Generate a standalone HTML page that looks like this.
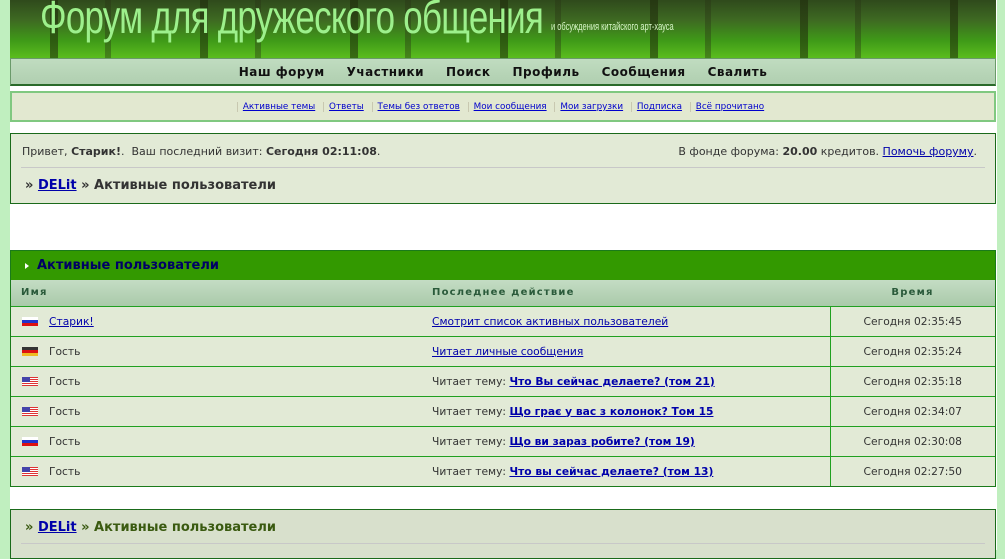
<!DOCTYPE html>
<html><head><meta charset="utf-8"><style>
*{margin:0;padding:0;box-sizing:border-box}
body{width:1005px;height:550px;overflow:hidden;background:#c0efbf;font-family:Verdana,"DejaVu Sans",sans-serif;font-size:11px;color:#333}
#wrap{position:absolute;left:10px;top:0;width:987px;height:550px;background:#fff}
#hdr{position:absolute;left:0;top:0;width:986px;height:58px;overflow:hidden;
background:
repeating-linear-gradient(90deg,rgba(30,40,10,0) 0 40px,rgba(30,40,10,.55) 40px 48px,rgba(30,40,10,0) 48px 95px,rgba(40,50,20,.4) 95px 101px,rgba(0,0,0,0) 101px 150px),
linear-gradient(180deg,#2f4a1c 0,#3e6a22 35%,#3f9a18 70%,#5bbd1e 100%);}
#hdr .t{position:absolute;left:30px;top:-10px;font-family:"Liberation Sans",sans-serif;font-size:46px;color:#9df08c;transform:scaleX(.76);transform-origin:left top;white-space:nowrap;letter-spacing:-1px}
#hdr .s{position:absolute;left:541px;top:21px;font-family:"Liberation Sans",sans-serif;font-size:11px;color:#d8f5c8;transform:scaleX(.68);transform-origin:left top;white-space:nowrap}
#nav{position:absolute;left:0;top:58px;width:986px;height:28px;background:linear-gradient(#c0dcc0,#b0cfb0);border:1px solid #6a9a6a;border-bottom:2px solid #2a6a2a;text-align:center;font:bold 12px "DejaVu Sans",sans-serif;color:#111;line-height:27px;letter-spacing:.5px}
#nav span{margin:0 11px}
#sub{position:absolute;left:0;top:91px;width:986px;height:31px;background:#e2e8d0;border:2px solid #80c880;text-align:center;line-height:29px;font-size:8.8px}
#sub a{color:#0000cc;padding:0 5px;border-left:1px solid #c8c8b0}
#info{position:absolute;left:0;top:133px;width:986px;height:71px;background:#e2ead6;border:1px solid #1a6a1a}
#info .l{position:absolute;left:11px;top:11px}
#info .r{position:absolute;right:18px;top:11px}
#info hr{position:absolute;left:10px;right:10px;top:33px;border:0;border-top:1px solid #c8c8c8}
.bc{position:absolute;left:14px;font-weight:bold;font-size:13px;color:#333}
.bc a{color:#0000aa}
a{color:#0000aa;text-decoration:underline}
#tbl{position:absolute;left:0;top:250px;width:986px;border:1px solid #1a7a1a}
#tbl .h{height:29px;background:#339900;color:#000066;font-weight:bold;font-size:13px;line-height:29px;padding-left:26px;position:relative}
#tbl .h:before{content:"";position:absolute;left:14px;top:12px;border-left:4px solid #fff;border-top:3px solid transparent;border-bottom:3px solid transparent}
table{border-collapse:collapse;width:100%}
th{height:26px;background:linear-gradient(#c4dcc4,#aacaaa);color:#2a5a3a;font-size:10px;letter-spacing:1.2px;text-align:left;border-bottom:1px solid #20a020}
td{height:30px;background:#e2ead6;border-top:1px solid #20a020;font-size:10.7px;color:#333}
td.t{border-left:1px solid #20a020;text-align:center;width:165px}
td.n{padding-left:38px;position:relative;width:421px}
.f{position:absolute;left:11px;top:10px;width:16px;height:9px}
.ru{background:linear-gradient(#fff 0 33%,#2233cc 33% 66%,#dd1111 66%)}
.de{background:linear-gradient(#333 0 33%,#dd1111 33% 66%,#eebb22 66%)}
.us{background:repeating-linear-gradient(#d33 0 1px,#fff 1px 2px)}
.us:before{content:"";position:absolute;left:0;top:0;width:8px;height:5px;background:#44a}
td a.b{font-weight:bold}
#bot{position:absolute;left:0;top:509px;width:986px;height:50px;background:#d8e0cc;border:1px solid #1a6a1a}
#bot .bc{color:#3a5a10}
#bot hr{position:absolute;left:10px;right:10px;top:33px;border:0;border-top:1px solid #c8c8c8}
</style></head><body>
<div id="wrap">
<div id="hdr"><div class="t">Форум для дружеского общения</div><div class="s">и обсуждения китайского арт-хауса</div></div>
<div id="nav"><span>Наш форум</span><span>Участники</span><span>Поиск</span><span>Профиль</span><span>Сообщения</span><span>Свалить</span></div>
<div id="sub"><a>Активные темы</a> <a>Ответы</a> <a>Темы без ответов</a> <a>Мои сообщения</a> <a>Мои загрузки</a> <a>Подписка</a> <a>Всё прочитано</a></div>
<div id="info"><div class="l">Привет, <b>Старик!</b>.&nbsp; Ваш последний визит: <b>Сегодня 02:11:08</b>.</div>
<div class="r">В фонде форума: <b>20.00</b> кредитов. <a>Помочь форуму</a>.</div><hr>
<div class="bc" style="top:44px">» <a>DELit</a> » Активные пользователи</div></div>
<div id="tbl"><div class="h">Активные пользователи</div>
<table><tr><th style="padding-left:10px">Имя</th><th>Последнее действие</th><th style="text-align:center">Время</th></tr>
<tr><td class="n"><span class="f ru"></span><a>Старик!</a></td><td><a>Смотрит список активных пользователей</a></td><td class="t">Сегодня 02:35:45</td></tr>
<tr><td class="n"><span class="f de"></span>Гость</td><td><a>Читает личные сообщения</a></td><td class="t">Сегодня 02:35:24</td></tr>
<tr><td class="n"><span class="f us"></span>Гость</td><td>Читает тему: <a class="b">Что Вы сейчас делаете? (том 21)</a></td><td class="t">Сегодня 02:35:18</td></tr>
<tr><td class="n"><span class="f us"></span>Гость</td><td>Читает тему: <a class="b">Що грає у вас з колонок? Том 15</a></td><td class="t">Сегодня 02:34:07</td></tr>
<tr><td class="n"><span class="f ru"></span>Гость</td><td>Читает тему: <a class="b">Що ви зараз робите? (том 19)</a></td><td class="t">Сегодня 02:30:08</td></tr>
<tr><td class="n"><span class="f us"></span>Гость</td><td>Читает тему: <a class="b">Что вы сейчас делаете? (том 13)</a></td><td class="t">Сегодня 02:27:50</td></tr>
</table></div>
<div id="bot"><div class="bc" style="top:10px">» <a>DELit</a> » Активные пользователи</div><hr></div>
</div>
</body></html>
